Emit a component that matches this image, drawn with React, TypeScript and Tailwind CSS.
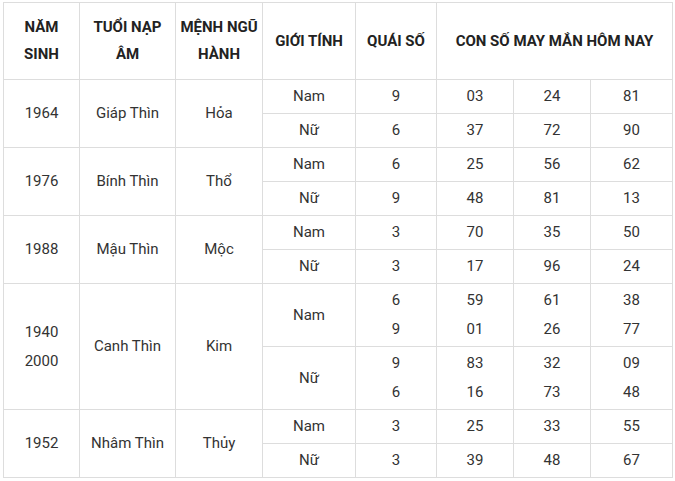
import React from 'react';

type Row = { gender: string; quai: string[]; nums: string[][]; h: string };
type Group = { years: string[]; tuoi: string; menh: string; rows: Row[] };

const data: Group[] = [
  {
    years: ['1964'], tuoi: 'Giáp Thìn', menh: 'Hỏa',
    rows: [
      { gender: 'Nam', quai: ['9'], nums: [['03', '24', '81']], h: 'h-[34px]' },
      { gender: 'Nữ', quai: ['6'], nums: [['37', '72', '90']], h: 'h-[34px]' },
    ],
  },
  {
    years: ['1976'], tuoi: 'Bính Thìn', menh: 'Thổ',
    rows: [
      { gender: 'Nam', quai: ['6'], nums: [['25', '56', '62']], h: 'h-[34px]' },
      { gender: 'Nữ', quai: ['9'], nums: [['48', '81', '13']], h: 'h-[34px]' },
    ],
  },
  {
    years: ['1988'], tuoi: 'Mậu Thìn', menh: 'Mộc',
    rows: [
      { gender: 'Nam', quai: ['3'], nums: [['70', '35', '50']], h: 'h-[34px]' },
      { gender: 'Nữ', quai: ['3'], nums: [['17', '96', '24']], h: 'h-[34px]' },
    ],
  },
  {
    years: ['1940', '2000'], tuoi: 'Canh Thìn', menh: 'Kim',
    rows: [
      { gender: 'Nam', quai: ['6', '9'], nums: [['59', '61', '38'], ['01', '26', '77']], h: 'h-[63px]' },
      { gender: 'Nữ', quai: ['9', '6'], nums: [['83', '32', '09'], ['16', '73', '48']], h: 'h-[63px]' },
    ],
  },
  {
    years: ['1952'], tuoi: 'Nhâm Thìn', menh: 'Thủy',
    rows: [
      { gender: 'Nam', quai: ['3'], nums: [['25', '33', '55']], h: 'h-[34px]' },
      { gender: 'Nữ', quai: ['3'], nums: [['39', '48', '67']], h: 'h-[34px]' },
    ],
  },
];

const th = 'border border-[#dddddd] font-bold text-[#222222] text-center align-middle p-0 leading-[27px]';
const td = 'border border-[#dddddd] text-[#333333] text-center align-middle p-0';

function Lines({ items }: { items: string[] }) {
  return (
    <div className="flex flex-col leading-[29px]">
      {items.map((t, i) => (
        <span key={i}>{t}</span>
      ))}
    </div>
  );
}

export default function App() {
  return (
    <div className="bg-white w-[675px] h-[481px] pt-[2px] pl-[3px]" style={{ fontFamily: 'Roboto, "Noto Sans", sans-serif' }}>
      <table className="border-collapse table-fixed w-[669px] text-[15px]">
        <colgroup>
          <col className="w-[76px]" />
          <col className="w-[96px]" />
          <col className="w-[87px]" />
          <col className="w-[93px]" />
          <col className="w-[81px]" />
          <col className="w-[77px]" />
          <col className="w-[77px]" />
          <col className="w-[82px]" />
        </colgroup>
        <thead>
          <tr className="h-[77px]">
            <th className={th}>NĂM<br />SINH</th>
            <th className={th}>TUỔI NẠP<br />ÂM</th>
            <th className={th}>MỆNH NGŨ<br />HÀNH</th>
            <th className={th}>GIỚI TÍNH</th>
            <th className={th}>QUÁI SỐ</th>
            <th className={th} colSpan={3}>CON SỐ MAY MẮN HÔM NAY</th>
          </tr>
        </thead>
        <tbody>
          {data.map((g) =>
            g.rows.map((r, i) => (
              <tr key={g.tuoi + r.gender} className={r.h}>
                {i === 0 && (
                  <>
                    <td className={td} rowSpan={2}><Lines items={g.years} /></td>
                    <td className={td} rowSpan={2}>{g.tuoi}</td>
                    <td className={td} rowSpan={2}>{g.menh}</td>
                  </>
                )}
                <td className={td}>{r.gender}</td>
                <td className={td}><Lines items={r.quai} /></td>
                {[0, 1, 2].map((c) => (
                  <td key={c} className={td}>
                    <Lines items={r.nums.map((n) => n[c])} />
                  </td>
                ))}
              </tr>
            ))
          )}
        </tbody>
      </table>
    </div>
  );
}
